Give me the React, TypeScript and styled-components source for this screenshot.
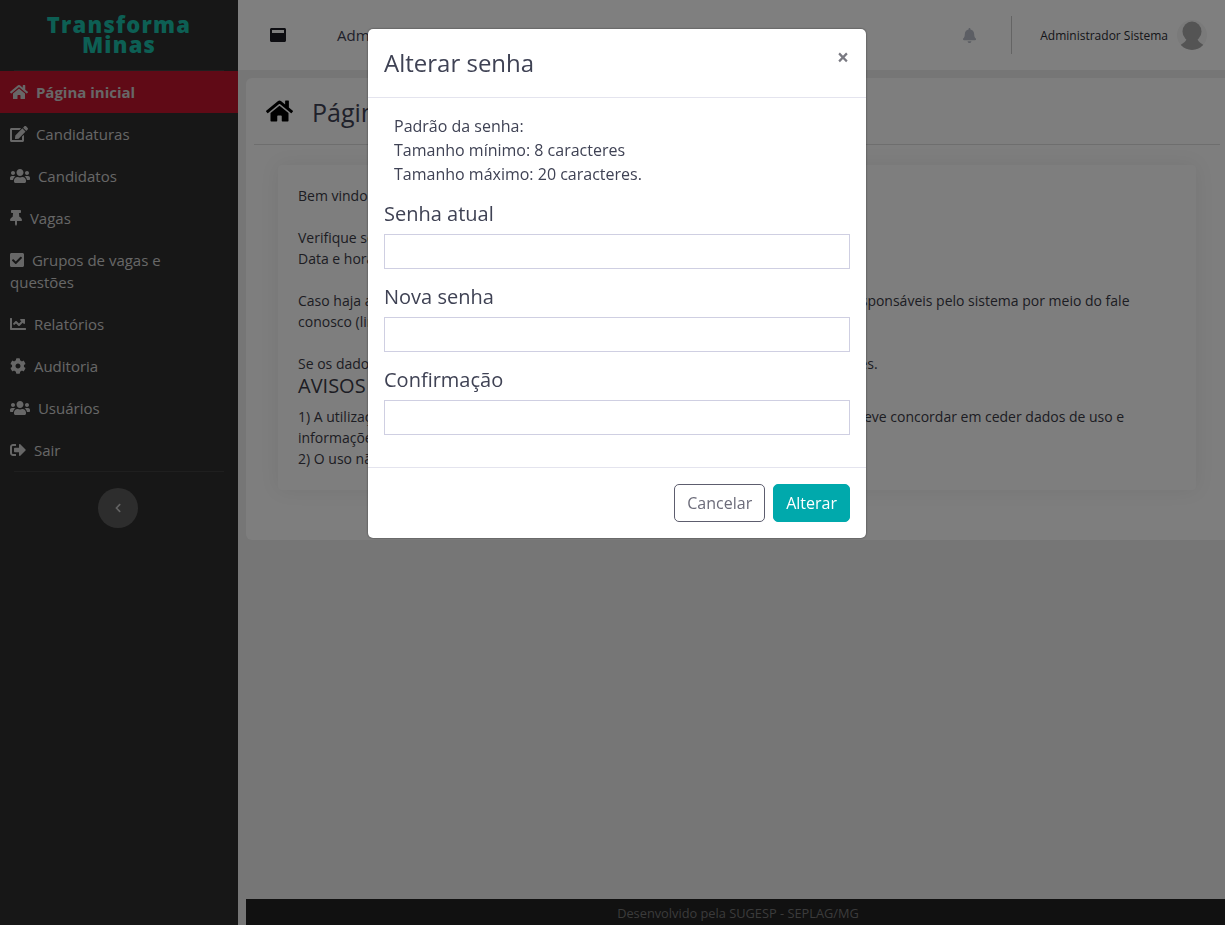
import React from "react";
import styled, { createGlobalStyle } from "styled-components";
import {
  FaBell,
  FaChartLine,
  FaCheckSquare,
  FaChevronLeft,
  FaCog,
  FaEdit,
  FaHome,
  FaSignOutAlt,
  FaThumbtack,
  FaUsers,
  FaWindowMaximize,
} from "react-icons/fa";

const GlobalStyle = createGlobalStyle`
  html, body { margin: 0; padding: 0; height: 100%; }
  body {
    font-family: "Open Sans", "Liberation Sans", sans-serif;
    font-size: 14px;
    line-height: 21px;
    color: #212529;
    background: #f4f4f4;
    overflow: hidden;
  }
  * { box-sizing: border-box; }
`;

const Shell = styled.div`
  display: flex;
  height: 925px;
`;

const Sidebar = styled.aside`
  width: 238px;
  flex: none;
  background: #2e2e2e;
  display: flex;
  flex-direction: column;
`;

const Brand = styled.div`
  height: 71px;
  margin: 0 14px;
  padding-top: 14px;
  border-bottom: 1px solid #3f3f3f;
  text-align: center;
  font-weight: 800;
  font-size: 22px;
  line-height: 20px;
  letter-spacing: 1.2px;
  color: #1abea8;
`;

const MenuItem = styled.a<{ $active?: boolean; $iconWidth: number }>`
  display: block;
  padding: 10px 40px 10px 10px;
  line-height: 22px;
  font-size: 15px;
  font-weight: ${(p) => (p.$active ? 700 : 400)};
  background: ${(p) => (p.$active ? "#c0142c" : "transparent")};
  color: #cfcfcf;
  & svg {
    vertical-align: -2px;
    width: ${(p) => p.$iconWidth}px;
    height: 16px;
    margin-right: 4px;
  }
`;

const SideRule = styled.hr`
  margin: 0 14px;
  border: 0;
  border-top: 1px solid #3f3f3f;
`;

const CollapseButton = styled.button`
  align-self: center;
  margin-top: 16px;
  margin-left: -2px;
  width: 40px;
  height: 40px;
  border-radius: 50%;
  border: 0;
  background: #5a5a5a;
  color: #c8c8c8;
  font-size: 10px;
  display: flex;
  align-items: center;
  justify-content: center;
`;

const Main = styled.main`
  flex: 1;
  min-width: 0;
  display: flex;
  flex-direction: column;
`;

const TopBar = styled.header`
  height: 70px;
  flex: none;
  background: #ffffff;
  display: flex;
  align-items: center;
  padding: 0 18px 0 32px;
  color: #2c2c34;
`;

const TopIcon = styled.span`
  font-size: 16px;
  display: flex;
  color: #1d1d24;
  margin-right: 51px;
`;

const TopLink = styled.span`
  flex: 1;
  font-size: 15px;
  color: #3f4254;
`;

const Bell = styled.span`
  display: flex;
  font-size: 15px;
  color: #b8bcc8;
  margin-right: 34px;
`;

const TopDivider = styled.span`
  width: 1px;
  height: 38px;
  background: #c8c8c8;
  margin-right: 28px;
`;

const UserName = styled.span`
  font-size: 12px;
  color: #2b2b33;
  margin-right: 9px;
`;

const Avatar = styled.svg`
  width: 30px;
  height: 30px;
  border-radius: 50%;
  display: block;
`;

const Content = styled.div`
  flex: 1;
  padding: 8px 0 0 8px;
  background: #ececec;
  display: flex;
  flex-direction: column;
`;

const PageCard = styled.section`
  height: 462px;
  background: #fcfcfc;
  border-radius: 6px 0 0 6px;
  padding: 0 5px 0 8px;
`;

const PageTitle = styled.h1`
  margin: 0;
  height: 67px;
  padding: 2px 0 0 12px;
  border-bottom: 1px solid #dcdcdc;
  display: flex;
  align-items: center;
  gap: 19px;
  font-size: 25px;
  font-weight: 400;
  color: #3f4254;
  & svg {
    color: #000;
    width: 27px;
    height: 24px;
    margin-top: -3px;
  }
`;

const InnerCard = styled.div`
  margin: 20px 24px 0;
  height: 325px;
  padding: 20px;
  background: #fdfdfd;
  box-shadow: 0 0 20px rgba(0, 0, 0, 0.07);
  border-radius: 4px;
  color: #3a3a46;
`;

const Para = styled.p`
  margin: 0 0 21px;
`;

const Avisos = styled.h4`
  margin: -23px 0 7px;
  font-size: 20px;
  line-height: 27px;
  font-weight: 400;
  color: #3a3a46;
`;

const Notice = styled.p`
  margin: 0;
`;

const Footer = styled.footer`
  margin-top: auto;
  height: 26px;
  padding-left: 5px;
  background: #222222;
  color: #777;
  font-size: 12.8px;
  line-height: 28px;
  text-align: center;
`;

const Backdrop = styled.div`
  position: fixed;
  inset: 0;
  background: rgba(0, 0, 0, 0.5);
`;

const Modal = styled.div`
  position: absolute;
  top: 29px;
  left: 368px;
  width: 498px;
  background: #fff;
  border-radius: 5px;
  box-shadow: 0 0 2px rgba(0, 0, 0, 0.6);
  color: #3f4254;
`;

const ModalHeader = styled.div`
  height: 69px;
  border-bottom: 1px solid #e4e4ee;
  padding: 0 16px;
  display: flex;
  align-items: center;
  justify-content: space-between;
`;

const ModalTitle = styled.h3`
  margin: 0 0 2px;
  font-size: 24px;
  font-weight: 400;
  color: #3f4254;
`;

const CloseButton = styled.button`
  align-self: flex-start;
  margin: 18px 1px 0 0;
  padding: 0;
  border: 0;
  background: none;
  font-family: inherit;
  font-size: 21px;
  line-height: 21px;
  font-weight: 700;
  color: #7a7a82;
`;

const ModalBody = styled.div`
  padding: 16px 16px 32px;
  height: 369px;
`;

const Rules = styled.div`
  padding-left: 10px;
  font-size: 16px;
  line-height: 24px;
  margin-bottom: 12px;
`;

const Label = styled.label`
  display: block;
  font-size: 20px;
  line-height: 32px;
  margin-bottom: 4px;
`;

const Input = styled.input`
  display: block;
  width: 100%;
  height: 35px;
  border: 1px solid #cfcfe2;
  background: #fff;
  margin-bottom: 12px;
`;

const ModalFooter = styled.div`
  height: 71px;
  border-top: 1px solid #e4e4ee;
  padding: 0 16px;
  display: flex;
  align-items: center;
  justify-content: flex-end;
  gap: 8px;
`;

const Button = styled.button<{ $primary?: boolean }>`
  height: 38px;
  padding: 0 12px;
  border-radius: 5px;
  font-family: inherit;
  font-size: 16px;
  border: 1px solid ${(p) => (p.$primary ? "#00a9ac" : "#5d5d6e")};
  background: ${(p) => (p.$primary ? "#00a9ac" : "#fff")};
  color: ${(p) => (p.$primary ? "#fff" : "#6c6c7a")};
`;

const menu = [
  { icon: <FaHome />, width: 18, label: "Página inicial", active: true },
  { icon: <FaEdit />, width: 18, label: "Candidaturas" },
  { icon: <FaUsers />, width: 20, label: "Candidatos" },
  { icon: <FaThumbtack />, width: 12, label: "Vagas" },
  { icon: <FaCheckSquare />, width: 14, label: "Grupos de vagas e questões" },
  { icon: <FaChartLine />, width: 16, label: "Relatórios" },
  { icon: <FaCog />, width: 16, label: "Auditoria" },
  { icon: <FaUsers />, width: 20, label: "Usuários" },
  { icon: <FaSignOutAlt />, width: 16, label: "Sair" },
];

export default function App() {
  return (
    <>
      <GlobalStyle />
      <Shell>
        <Sidebar>
          <Brand>
            Transforma
            <br />
            Minas
          </Brand>
          {menu.map((item) => (
            <MenuItem key={item.label} $active={item.active} $iconWidth={item.width}>
              {item.icon} {item.label}
            </MenuItem>
          ))}
          <SideRule />
          <CollapseButton>
            <FaChevronLeft />
          </CollapseButton>
        </Sidebar>
        <Main>
          <TopBar>
            <TopIcon>
              <FaWindowMaximize />
            </TopIcon>
            <TopLink>Administrador</TopLink>
            <Bell>
              <FaBell />
            </Bell>
            <TopDivider />
            <UserName>Administrador Sistema</UserName>
            <Avatar viewBox="0 0 30 30">
              <rect width="30" height="30" fill="#f4f4f4" />
              <ellipse cx="15" cy="11.5" rx="9.5" ry="10" fill="#a8a8a8" />
              <path d="M0 29c2-5 8-5 9.500-10h11c1.500 5 7.500 5 9.500 10l-3 1H3z" fill="#a8a8a8" />
            </Avatar>
          </TopBar>
          <Content>
            <PageCard>
              <PageTitle>
                <FaHome /> Página inicial
              </PageTitle>
              <InnerCard>
                <Para>Bem vindo ao sistema Transforma Minas.</Para>
                <Para>
                  Verifique se seus dados estão corretos:
                  <br />
                  Data e hora do último acesso.
                </Para>
                <Para>
                  Caso haja alguma inconsistência nos dados apresentados, entre em contato com os responsáveis pelo sistema por meio do fale conosco (link no menu lateral).
                </Para>
                <Para>Se os dados estiverem corretos, você já pode prosseguir para as demais funcionalidades.</Para>
                <Avisos>AVISOS</Avisos>
                <Notice>
                  1) A utilização do sistema implica em aceite dos termos de uso e da norma: o usuário deve concordar em ceder dados de uso e informações.
                  <br />
                  2) O uso não autorizado é proibido.
                </Notice>
              </InnerCard>
            </PageCard>
            <Footer>Desenvolvido pela SUGESP - SEPLAG/MG</Footer>
          </Content>
        </Main>
      </Shell>
      <Backdrop>
        <Modal>
          <ModalHeader>
            <ModalTitle>Alterar senha</ModalTitle>
            <CloseButton>×</CloseButton>
          </ModalHeader>
          <ModalBody>
            <Rules>
              Padrão da senha:
              <br />
              Tamanho mínimo: 8 caracteres
              <br />
              Tamanho máximo: 20 caracteres.
            </Rules>
            <Label>Senha atual</Label>
            <Input type="password" />
            <Label>Nova senha</Label>
            <Input type="password" />
            <Label>Confirmação</Label>
            <Input type="password" />
          </ModalBody>
          <ModalFooter>
            <Button>Cancelar</Button>
            <Button $primary>Alterar</Button>
          </ModalFooter>
        </Modal>
      </Backdrop>
    </>
  );
}
